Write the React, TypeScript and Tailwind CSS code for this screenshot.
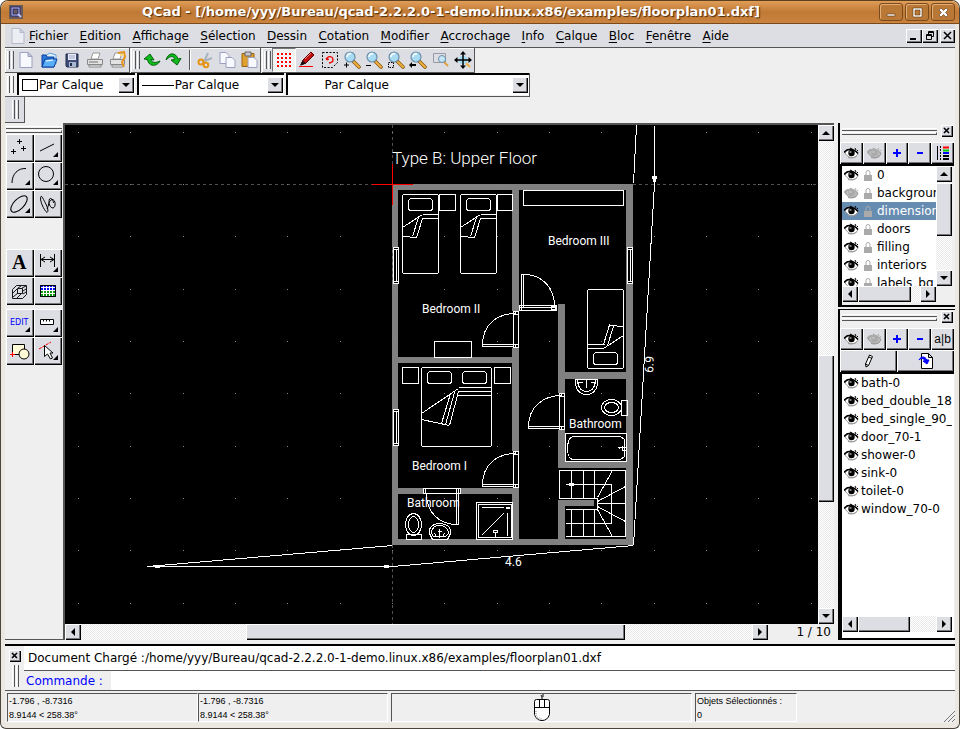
import React from 'react';
import { clsx } from 'clsx';

const raised = 'bg-[#dddee4] shadow-[inset_1px_1px_0_#fff,inset_-1px_-1px_0_#000,inset_-2px_-2px_0_#77777c]';
const dither = 'bg-[repeating-conic-gradient(#e9e9e9_0_25%,#fff_0_50%)] bg-[length:2px_2px]';

type Dir = 'up' | 'down' | 'left' | 'right';

const arrows: Record<Dir, string> = {
  up: 'M4 10h8l-4-4z',
  down: 'M4 6h8l-4 4z',
  left: 'M10 4v8l-4-4z',
  right: 'M6 4v8l4-4z',
};

const Arrow: React.FC<{ dir: Dir }> = ({ dir }) => (
  <svg width="16" height="16" viewBox="0 0 16 16" className="block">
    <path d={arrows[dir]} fill="#000" />
  </svg>
);

const ArrowButton: React.FC<{ dir: Dir; label: string }> = ({ dir, label }) => (
  <button aria-label={label} className={clsx('size-4 shrink-0', raised)}>
    <Arrow dir={dir} />
  </button>
);

interface ScrollBarProps {
  vertical?: boolean;
  before: number;
  thumb: number;
  after: number;
}

const ScrollBar: React.FC<ScrollBarProps> = ({ vertical, before, thumb, after }) => (
  <div className={clsx('flex', dither, vertical ? 'h-full w-4 flex-col' : 'h-4 flex-1')}>
    <ArrowButton dir={vertical ? 'up' : 'left'} label="Reculer" />
    <div style={{ flex: `${before} 1 0` }} />
    <div className={raised} style={{ flex: `${thumb} 1 0` }} />
    <div style={{ flex: `${after} 1 0` }} />
    <ArrowButton dir={vertical ? 'down' : 'right'} label="Avancer" />
  </div>
);

const VGrip: React.FC = () => (
  <div className="flex shrink-0 items-stretch gap-px py-[3px] pl-0.5 pr-px">
    <div className="w-[3px] border-l border-r border-l-white border-r-[#555]" />
    <div className="w-[3px] border-l border-r border-l-white border-r-[#555]" />
  </div>
);

const HGrip: React.FC = () => (
  <div className="flex flex-1 flex-col gap-px pt-[3px]">
    <div className="h-[3px] border-b border-t border-b-[#555] border-t-white" />
    <div className="h-[3px] border-b border-r border-t border-b-[#555] border-r-[#555] border-t-white" />
  </div>
);

const CloseBox: React.FC = () => (
  <button aria-label="Fermer le panneau" className={clsx('flex size-3 items-center justify-center', raised)}>
    <svg width="8" height="8" viewBox="0 0 8 8">
      <path d="M1 1l5 5M6 1l-5 5" stroke="#000" strokeWidth="1.6" />
    </svg>
  </button>
);

/* ---------- toolbar icons ---------- */

const Svg: React.FC<{ children: React.ReactNode }> = ({ children }) => (
  <svg width="18" height="18" viewBox="0 0 18 18" fill="none" className="block">
    {children}
  </svg>
);

const Lens: React.FC = () => (
  <>
    <path d="M10 10l6 6" stroke="#8a5a14" strokeWidth="3.6" strokeLinecap="round" />
    <path d="M11 11l5 5" stroke="#f0b040" strokeWidth="2" strokeLinecap="round" />
    <circle cx="7" cy="6" r="5" fill="#a8dcf4" stroke="#6d8fa8" strokeWidth="1.2" />
    <path d="M4 6a3 3 0 0 1 4-3" stroke="#fff" strokeWidth="1.6" />
  </>
);

const PageShape: React.FC<{ d: string }> = ({ d }) => <path d={d} fill="#f8f9fe" stroke="#9aa0bd" />;

const icons = {
  doc: (
    <Svg>
      <PageShape d="M3 1.500h8l4 4v11h-12z" />
      <path d="M11 1.500v4h4z" fill="#c9cee6" stroke="#9aa0bd" />
    </Svg>
  ),
  open: (
    <Svg>
      <path d="M5 5l5-3 6 2v9h-11z" fill="#dff1ff" stroke="#5d9fd8" />
      <path d="M2 4h4l1 2h7v10H2z" fill="#2b78d8" stroke="#0b3fa0" />
      <path d="M2 16l3-8h12l-3 8z" fill="#59aef5" stroke="#0b3fa0" />
      <path d="M6 10l7-1" stroke="#d3edff" strokeWidth="1.5" />
    </Svg>
  ),
  save: (
    <Svg>
      <path d="M3 3h12v13H4l-1-1z" fill="#3f4c78" stroke="#222b4c" />
      <path d="M5 3h8v6H5z" fill="#e8ecf8" />
      <path d="M6 5h6M6 7h6" stroke="#9ca6c4" />
      <path d="M6 11h7v5H6z" fill="#a9b4cf" />
      <path d="M7 12h2v3H7z" fill="#222b4c" />
    </Svg>
  ),
  print: (
    <Svg>
      <path d="M5 8l2-6h7l-2 6z" fill="#fff" stroke="#999" />
      <path d="M1.500 8.500h15v5h-15z" fill="#e2e2e2" stroke="#888" />
      <path d="M3 14h12v2H3z" fill="#f7f7f7" stroke="#888" />
      <path d="M3 11h9" stroke="#777" />
    </Svg>
  ),
  preview: (
    <Svg>
      <path d="M4 8l2-6h7l-2 6z" fill="#fff" stroke="#999" />
      <path d="M1.500 8.500h14v5h-14z" fill="#e2e2e2" stroke="#888" />
      <path d="M3 14h11v2H3z" fill="#f7f7f7" stroke="#888" />
      <path d="M9 2l6-1 1 5-3 5 2 5" stroke="#e8941c" strokeWidth="2" />
      <path d="M11 4h4" stroke="#ffd88a" strokeWidth="2" />
    </Svg>
  ),
  undo: (
    <Svg>
      <path d="M1 8l6-5 4 6-3-.5c.5 3 4 4 9 1.500C15 15 6 17 4.500 8.500z" fill="#0fbb1c" stroke="#06610c" />
    </Svg>
  ),
  redo: (
    <Svg>
      <path d="M1 9C3 1 11 1 13 8l3-.5-4 6.500-6-5 3.500-.5C9 5 6 4 1 9z" fill="#0fbb1c" stroke="#06610c" />
    </Svg>
  ),
  cut: (
    <Svg>
      <path d="M12 2L8 11M16 7L6 11" stroke="#a8b2bf" strokeWidth="2" />
      <circle cx="5" cy="11" r="2.500" stroke="#e69414" strokeWidth="2" />
      <circle cx="10" cy="14" r="2.300" stroke="#e69414" strokeWidth="2" />
    </Svg>
  ),
  copy: (
    <Svg>
      <PageShape d="M2 1.500h6l3 3v8H2z" />
      <PageShape d="M8 6.500h6l3 3v7H8z" />
    </Svg>
  ),
  paste: (
    <Svg>
      <path d="M2 2.500h12v13H2z" fill="#dfa030" stroke="#97650f" />
      <path d="M5 1h6v4H5z" fill="#c4c7d0" stroke="#666" />
      <PageShape d="M8 6.500h6l3 3v7H8z" />
    </Svg>
  ),
  grid: (
    <svg width="18" height="18" viewBox="0 0 18 18" shapeRendering="crispEdges">
      {[2, 6, 10, 14].map((x) => [2, 6, 10, 14].map((y) => <rect key={`${x}-${y}`} x={x} y={y} width="2" height="2" fill="#f00" />))}
    </svg>
  ),
  draft: (
    <Svg>
      <path d="M1 15.500h14" stroke="#f00" />
      <path d="M3 14l2-5 8-8 3 3-8 8z" fill="#c01010" stroke="#5c0000" />
      <path d="M2 14.500l2.500-5 3.500 3z" fill="#111" />
      <path d="M7 8l6-6" stroke="#ff8080" />
    </Svg>
  ),
  redraw: (
    <Svg>
      <path d="M1.500 1.500h15v10l-5 5h-10z" stroke="#000" strokeDasharray="2 1.500" />
      <path d="M6 9a3 3 0 1 1 4 2.500M6 9l-1-2M6 9l2-1M10 11.500l-2 .5" stroke="#e00" strokeWidth="1.300" />
    </Svg>
  ),
  zoomIn: (
    <Svg>
      <Lens />
      <path d="M1 14h5M3.500 11.500v5" stroke="#000" />
    </Svg>
  ),
  zoomOut: (
    <Svg>
      <Lens />
      <path d="M1 14.500h5" stroke="#000" />
    </Svg>
  ),
  zoomAuto: (
    <Svg>
      <Lens />
      <path d="M1.500 11.500h5v5h-5z" stroke="#000" strokeDasharray="1.500 1" />
    </Svg>
  ),
  zoomPrev: (
    <Svg>
      <Lens />
      <path d="M0 14l3-3v2h4v2H3v2z" fill="#000" />
    </Svg>
  ),
  zoomWin: (
    <Svg>
      <path d="M1.500 2.500h12v9h-12z" stroke="#9a9aa6" />
      <path d="M12 11l4 4" stroke="#e0a040" strokeWidth="2" />
      <circle cx="10" cy="8" r="3.500" fill="#c4e6f6" stroke="#6d8fa8" />
    </Svg>
  ),
  zoomPan: (
    <Svg>
      <path d="M11 11l5 5" stroke="#f0b040" strokeWidth="2" />
      <circle cx="9" cy="9" r="4.500" fill="#a8dcf4" />
      <path d="M9 2v14M2 9h14" stroke="#000" strokeWidth="1.500" />
      <path d="M9 0l3 3.500H6zM9 18l3-3.500H6zM0 9l3.500-3v6zM18 9l-3.500-3v6z" fill="#000" />
    </Svg>
  ),
};

const ToolButton: React.FC<{ name: keyof typeof icons; label: string; pressed?: boolean }> = ({ name, label, pressed }) => (
  <button
    aria-label={label}
    className={clsx(
      'flex flex-1 items-center justify-center',
      pressed && 'border border-b-white border-l-[#777] border-r-white border-t-[#777]',
      pressed && dither,
    )}
  >
    {icons[name]}
  </button>
);

/* ---------- left tool palette ---------- */

const palette: { label: string; sub?: boolean; art: React.ReactNode }[][] = [
  [
    { label: 'Points', art: <path d="M11 7.500h5M13.500 5v5M5 17.500h5M7.500 15v5M15 14.500h5M17.500 12v5" /> },
    { label: 'Lignes', sub: true, art: <path d="M6 17l14-7" /> },
    { label: 'Arcs', sub: true, art: <path d="M6 21C6 12 12 6 20 6.500" /> },
    { label: 'Cercles', sub: true, art: <circle cx="12" cy="12" r="7.500" /> },
    { label: 'Ellipses', sub: true, art: <ellipse cx="13" cy="14" rx="10.500" ry="5" transform="rotate(-45 13 14)" /> },
    {
      label: 'Splines',
      art: <path d="M7 6.500c-2 3 3 14 6 16 3-2-2-10-4.500-15-1-1.500-1.500-1.500-1.500-1zM13 19c2-3 1-8 5-9.500 4 0 4 8 1 8.500-3 0-5-5-3.500-9 2-2 4 2 4 4" />,
    },
  ],
  [
    {
      label: 'Textes',
      art: (
        <text x="6" y="20" fontSize="20" fontWeight="bold" fontFamily='"Liberation Serif", serif' fill="#000" stroke="none">
          A
        </text>
      ),
    },
    { label: 'Cotations', sub: true, art: <path d="M6.500 5v13M20.500 5v13M7 10.500h13M11 8l-4 2.500 4 2.500M16 8l4 2.500-4 2.500" /> },
    {
      label: 'Hachures',
      art: (
        <path
          strokeWidth=".9"
          d="M6.500 12.500l4-4h10v9l-4 4h-10zM11.500 11.500h5v5h-5zM7 16l4-4M7 20l5-4M11 21l4-4M16 11l4-2M17 14l3-2M17 17l3-2M12 11l3-2"
        />
      ),
    },
    {
      label: 'Image',
      art: (
        <>
          <path d="M6 8h16v5H6z" fill="#00f" stroke="none" />
          <path d="M6 13h16v7H6z" fill="#0a9a0a" stroke="none" />
          <path d="M6 10.500h16M6 13.500h16M6 16.500h16M9.500 8v12M12.500 8v12M15.500 8v12M18.500 8v12" stroke="#fff" />
          <path d="M6.500 8.500h15v11h-15z" />
        </>
      ),
    },
  ],
  [
    {
      label: 'Edition',
      sub: true,
      art: (
        <text x="4" y="16" fontSize="8" fontFamily='"DejaVu Sans", sans-serif' fill="#00f" stroke="none">
          EDIT
        </text>
      ),
    },
    { label: 'Mesures', sub: true, art: <path d="M6.500 10.500h13v5h-13zM9.500 10.500v2M12.500 10.500v2M15.500 10.500v2" fill="#fff" /> },
    {
      label: 'Blocs',
      art: (
        <>
          <path d="M6.500 7.500h12v10h-12z" fill="#fffbd6" />
          <circle cx="18" cy="17" r="5" fill="#fffbd6" />
          <path d="M4 17.500h5M6.500 15v5" stroke="#f00" />
        </>
      ),
    },
    {
      label: 'Sélection',
      sub: true,
      art: (
        <>
          <path d="M5 12l12-7" stroke="#f00" strokeDasharray="3 1" />
          <path d="M10.500 8.500v11l3-2.500 3 5 2-1-2.500-5h3z" fill="#fff" />
        </>
      ),
    },
  ],
];

const PaletteGroup: React.FC<{ index: number }> = ({ index }) => (
  <div className="grid grid-cols-2">
    {palette[index].map((tool) => (
      <button key={tool.label} aria-label={tool.label} className={clsx('size-7', raised)}>
        <svg width="28" height="28" viewBox="0 0 28 28" fill="none" stroke="#000">
          {tool.art}
          {tool.sub && <path d="M24 18v5h-5z" fill="#000" stroke="none" />}
        </svg>
      </button>
    ))}
  </div>
);

/* ---------- docks ---------- */

const Eye: React.FC<{ off?: boolean }> = ({ off }) => {
  const ink = off ? '#aaa' : '#000';
  return (
    <svg width="15" height="12" viewBox="0 0 15 12" fill="none" className="block shrink-0">
      <path d="M1 6c3-5 9-5 13 1-3 5-9 5-13-1z" fill={off ? '#bbb' : '#fff'} stroke="#999" />
      <path d="M0 5.500c3-4 9-5 14 1" stroke={ink} strokeWidth="1.500" />
      <path d="M2 3.500l2-1M6 1l2 1M11 1l1 2M13 3l1 1" stroke={ink} />
      <circle cx="7.500" cy="6" r="3.200" fill={ink} />
      <path d="M5.500 5h2" stroke={off ? '#ddd' : '#fff'} />
      <path d="M4 10.500c3 1 7 .5 9-2" stroke="#999" />
    </svg>
  );
};

const Lock: React.FC = () => (
  <svg width="8" height="11" viewBox="0 0 8 11" fill="none" className="block shrink-0">
    <path d="M2 5V2.500a2 2 0 0 1 4 0V5" stroke="#aaa" />
    <path d="M0 5h8v6H0z" fill="#aaa" />
  </svg>
);

const Plus: React.FC = () => (
  <svg width="10" height="10" viewBox="0 0 10 10">
    <path d="M5 1v8M1 5h8" stroke="#00f" strokeWidth="2" />
  </svg>
);

const Minus: React.FC = () => (
  <svg width="10" height="10" viewBox="0 0 10 10">
    <path d="M2 5h6" stroke="#00f" strokeWidth="2" />
  </svg>
);

const LayerAttributes: React.FC = () => (
  <svg width="14" height="16" viewBox="0 0 14 16" fill="none">
    <path d="M1.500 1v14" stroke="#000" />
    <path d="M4.500 1v14" stroke="#000" strokeDasharray="2 1" />
    <path d="M7 2.500h6" stroke="#f00" strokeWidth="2" />
    <path d="M7 5.500h6" stroke="#0c0" strokeWidth="2" />
    <path d="M7 8h6" stroke="#00f" strokeWidth="2" />
    <path d="M7 11h6M7 14h6" stroke="#000" strokeWidth="2" />
  </svg>
);

const DockButton: React.FC<{ label: string; children: React.ReactNode }> = ({ label, children }) => (
  <button aria-label={label} className={clsx('flex h-[22px] flex-1 items-center justify-center', raised)}>
    {children}
  </button>
);

const DockHeader: React.FC = () => (
  <div className="flex h-[17px] shrink-0 items-start gap-1 pl-0.5 pr-px">
    <HGrip />
    <CloseBox />
  </div>
);

const layers = [
  { name: '0' },
  { name: 'background', hidden: true },
  { name: 'dimensions', selected: true },
  { name: 'doors' },
  { name: 'filling' },
  { name: 'interiors' },
  { name: 'labels_bg' },
];

const blocks = ['bath-0', 'bed_double_180', 'bed_single_90_0', 'door_70-1', 'shower-0', 'sink-0', 'toilet-0', 'window_70-0'];

const LayerDock: React.FC = () => (
  <section className="flex h-[184px] shrink-0 flex-col border-b-2 border-l-2 border-b-black border-l-black pr-px pt-0.5">
    <DockHeader />
    <div className="flex">
      <DockButton label="Montrer tous les calques"><Eye /></DockButton>
      <DockButton label="Cacher tous les calques"><Eye off /></DockButton>
      <DockButton label="Ajouter un calque"><Plus /></DockButton>
      <DockButton label="Supprimer le calque"><Minus /></DockButton>
      <DockButton label="Attributs du calque"><LayerAttributes /></DockButton>
    </div>
    <div className="flex min-h-0 flex-1 flex-col border-l-2 border-t-2 border-black bg-[#efefef] pr-0.5">
      <div className="flex h-[120px]">
        <ul className="flex-1 overflow-hidden bg-white">
          {layers.map((layer) => (
            <li
              key={layer.name}
              className={clsx(
                'flex h-[18px] items-center gap-[5px] whitespace-nowrap pl-0.5',
                layer.selected && 'bg-[#678cb2] text-white',
              )}
            >
              <Eye off={layer.hidden} />
              <Lock />
              <span>{layer.name}</span>
            </li>
          ))}
        </ul>
        <ScrollBar vertical before={1} thumb={54} after={35} />
      </div>
      <div className="flex pr-4">
        <ScrollBar before={0} thumb={54} after={9} />
      </div>
    </div>
  </section>
);

const BlockDock: React.FC = () => (
  <section className="mt-0.5 flex min-h-0 flex-1 flex-col border-b-2 border-l-2 border-t border-black pr-px pt-px">
    <DockHeader />
    <div className="flex">
      <DockButton label="Montrer tous les blocs"><Eye /></DockButton>
      <DockButton label="Cacher tous les blocs"><Eye off /></DockButton>
      <DockButton label="Ajouter un bloc"><Plus /></DockButton>
      <DockButton label="Supprimer le bloc"><Minus /></DockButton>
      <DockButton label="Renommer le bloc">
        <span className='font-["Liberation_Sans",sans-serif]'>a|b</span>
      </DockButton>
    </div>
    <div className="flex">
      <DockButton label="Modifier le bloc">
        <svg width="16" height="16" viewBox="0 0 16 16" fill="#fff" stroke="#000">
          <path d="M5 14l-.5-3 4-9 3 1.500-4 9zM4.500 11l3 1.500M8 4l3 1.500" />
        </svg>
      </DockButton>
      <DockButton label="Insérer le bloc">
        <svg width="16" height="16" viewBox="0 0 16 16" fill="#fff" stroke="#000">
          <path d="M3.500.5h7l4 4v11h-11zM10.500.5v4h4" />
          <path d="M1 7c2-4 6-4 8 0h2L9 11 5 8h2C6 5 3 5 1 7z" fill="#00f" stroke="#00f" />
        </svg>
      </DockButton>
    </div>
    <div className="flex min-h-0 flex-1 flex-col border-l-2 border-t-2 border-black bg-white pr-0.5">
      <ul className="flex-1 overflow-hidden">
        {blocks.map((name) => (
          <li key={name} className="flex h-[18px] items-center gap-0.5 whitespace-nowrap pl-0.5">
            <Eye />
            <span>{name}</span>
          </li>
        ))}
      </ul>
      <div className="flex pb-1.5">
        <ScrollBar before={0} thumb={52} after={26} />
      </div>
    </div>
  </section>
);

/* ---------- drawing ---------- */

const gridX = [78, 130, 183, 235, 287, 340, 392, 444, 497, 549, 601, 654, 706, 758, 811];
const gridY = [132, 184, 236, 289, 341, 393, 446, 498, 550, 603];

// x, y, width, height of every wall segment
const walls = [
  [392, 184, 241, 6],
  [392, 184, 6, 361],
  [626, 184, 7, 361],
  [392, 539, 241, 6],
  [512, 190, 7, 121],
  [512, 348, 7, 103],
  [512, 488, 7, 51],
  [398, 357, 114, 6],
  [398, 488, 114, 6],
  [558, 304, 7, 89],
  [558, 430, 7, 38],
  [565, 372, 61, 7],
  [558, 462, 68, 6],
  [558, 500, 7, 39],
  [558, 500, 36, 6],
];

const SingleBed: React.FC<{ transform: string }> = ({ transform }) => (
  <g transform={transform}>
    <rect x="0" y="0" width="36" height="79" rx="2" />
    <rect x="6" y="4" width="24" height="12" rx="3" />
    <path d="M20 20h16M19 24h17M0 33L20 20M16 23L10 42M20 24L14 43.500L0 41.500" />
  </g>
);

const WindowFrame: React.FC<{ x: number; y: number }> = ({ x, y }) => (
  <g transform={`translate(${x} ${y})`}>
    <rect x="0" y="0" width="5" height="36" fill="#000" />
    <path d="M2.500 2v32M0 2h5M0 34h5" />
  </g>
);

const Door: React.FC<{ x: number; y: number }> = ({ x, y }) => (
  <g transform={`translate(${x} ${y})`}>
    <rect x="0" y="0" width="5" height="36" fill="#000" />
    <path d="M0 3h5M0 33h5M2 0v3M2 33v3M0 33h-31v2h31M-31 33C-31 14-17 2 2 2" />
  </g>
);

const FloorPlan: React.FC = () => (
  <svg className="block h-full w-full bg-black" role="img" aria-label="floorplan01.dxf">
    <g transform="translate(-65 -125)" fill="none" stroke="#fff" shapeRendering="crispEdges">
      <g fill="#808080" stroke="none">
        {walls.map(([x, y, w, h]) => (
          <rect key={`${x}-${y}-${w}`} x={x} y={y} width={w} height={h} />
        ))}
      </g>
      <path d="M65 184.500H392M633 184.500H818M392.500 125V184M392.500 545V624M392.500 247V283" stroke="#505050" strokeDasharray="3 3" />
      {gridX.map((x) => gridY.map((y) => <rect key={`${x}-${y}`} x={x} y={y} width="1" height="1" fill="#888" stroke="none" />))}
      <g transform="translate(.5 .5)">
        <SingleBed transform="translate(402 194)" />
        <SingleBed transform="translate(460 194)" />
        <SingleBed transform="translate(623 368) rotate(180)" />
        <path d="M439 194h16v16h-16zM497 194h15v16h-15zM523 190h100v15h-100zM434 341h37v16h-37z" />
        <path d="M402 367h16v16h-16zM494 367h16v16h-16z" />

        <rect x="421" y="367" width="70" height="79" rx="2" />
        <rect x="427" y="371" width="24" height="12" rx="3" />
        <rect x="462" y="371" width="24" height="12" rx="3" />
        <path d="M458 387h33M457 391h34M456 395h35M421 413L458 388M421 419L449 425M450 393L441 423M454 392L445 424M458 391L449 425" />

        <WindowFrame x={393} y={247} />
        <WindowFrame x={627} y={247} />
        <WindowFrame x={393} y={409} />
        <Door x={513} y={311} />
        <Door x={513} y={451} />
        <Door x={559} y={393} />

        <rect x="519" y="305" width="37" height="5" fill="#000" />
        <path d="M521 310v-36h2v32M523 274C542 274 554 287 554 306M551 306h4v3h-4zM519 307h37" />
        <rect x="423" y="488" width="37" height="5" fill="#000" />
        <path d="M425 488v5M458 488v36h-2v-36M426 493C426 510 437 524 456 524" />

        {/* stairs */}
        <path d="M597 498h-38v-28h66v66h-60M571 470v28M583 470v28M594 470v28M571 509v27M583 509v27M594 509v27M565 509h32v-12M565 484h46v39h-46" />
        <path d="M597 497L612 470M597 501L625 486M597 503h28M597 506L625 521M597 509L612 536" />
        <rect x="569" y="483" width="4" height="2" fill="#fff" />

        {/* upper bathroom */}
        <path d="M575 379h22C598 388 593 394 586 394S574 388 575 379zM577 379C577 387 581 391 586 391S595 387 595 379M577 382h5M590 382h5M586 379v8" />
        <ellipse cx="611" cy="407" rx="10" ry="8" />
        <ellipse cx="611" cy="407" rx="7" ry="5" />
        <path d="M621 400h6v15h-6zM565 433h61v28h-61z" />
        <path d="M573 436h47l4 3v17l-4 3h-47c-4 0-6-5-6-11s2-12 6-12zM617 447h8M619 446v2M622 445v5h3" />

        {/* lower bathroom */}
        <ellipse cx="413" cy="524" rx="8" ry="11" />
        <ellipse cx="413" cy="524" rx="5" ry="8" />
        <path d="M406 534h15v5h-15z" />
        <path d="M429 533C428 526 433 523 439 523S451 526 450 533L447 539h-15zM431 533C431 528 434 525 439 525S448 528 448 533L445 536h-12zM439 528v9M437 531h4M434 533l2 3M444 533l-2 3" />
        <path d="M476 502h36v37h-36zM478 504h33v33h-33zM481 507h22M507 512v23M481 535L503 513M495 532v5M493 530h4v2h-4z" />
        <rect x="506" y="507" width="3" height="1" fill="#fff" />

        {/* dimension lines */}
        <path d="M636 125L633 183M654 125V183M654 183L633 545M392 545L147 566H392L633 545" />
        <path d="M652 176h4l-1 5h-2zM155 565h4v2h-4zM384 565h4v2h-4z" fill="#fff" />
      </g>
      <g fill="#f00" stroke="none">
        <rect x="372" y="184" width="41" height="1" />
        <rect x="392" y="164" width="1" height="41" />
      </g>
    </g>
    <g transform="translate(-65 -125)" fill="#fff" fontFamily="Roboto, sans-serif" fontSize="12">
      <text x="392" y="164" fontSize="17" fontWeight="300">Type B: Upper Floor</text>
      <text x="422" y="313">Bedroom II</text>
      <text x="548" y="245">Bedroom III</text>
      <text x="412" y="470">Bedroom I</text>
      <text x="407" y="507">Bathroom</text>
      <text x="569" y="428">Bathroom</text>
      <text x="505" y="566">4.6</text>
      <text transform="translate(653 373) rotate(-87)">6.9</text>
    </g>
  </svg>
);

/* ---------- window chrome ---------- */

const menus = [
  'Fichier', 'Edition', 'Affichage', 'Sélection', 'Dessin', 'Cotation', 'Modifier',
  'Accrochage', 'Info', 'Calque', 'Bloc', 'Fenêtre', 'Aide',
];

const windowButtons = [
  { label: 'Réduire', d: 'M4 10h8v2H4z' },
  { label: 'Agrandir', d: 'M4 4h9v9H4zM6 6v5h5V6z' },
  { label: 'Fermer', d: 'M4 6l2-2 2.500 2.500L11 4l2 2-2.500 2.500L13 11l-2 2-2.500-2.500L6 13l-2-2 2.500-2.500z' },
];

const TitleBar: React.FC = () => (
  <header className="flex h-[23px] shrink-0 items-center rounded-t-lg border-b border-[#7b4a1c] bg-linear-to-b from-[#e09d58] via-[#c07a35] via-50% to-[#cb8340] pl-2 pr-1">
    <svg width="14" height="14" viewBox="0 0 14 14" fill="none">
      <rect width="14" height="14" fill="#6a5a58" />
      <rect x="3" y="3" width="7" height="7" stroke="#22226e" strokeWidth="3" />
      <rect x="3" y="3" width="7" height="7" stroke="#c0c4ee" strokeWidth="1" />
      <path d="M9 9l3 3" stroke="#c0c4ee" strokeWidth="2" />
    </svg>
    <h1 className="flex-1 whitespace-nowrap text-center text-[13px] font-bold leading-5 text-white [text-shadow:1px_1px_1px_#4a2a08]">
      QCad - [/home/yyy/Bureau/qcad-2.2.2.0-1-demo.linux.x86/examples/floorplan01.dxf]
    </h1>
    <div className="flex gap-0.5">
      {windowButtons.map((b) => (
        <button
          key={b.label}
          aria-label={b.label}
          className="flex h-[18px] w-6 items-center justify-center rounded-[3px] border border-[#7b4a1c] bg-[#b97836] shadow-[inset_1px_1px_0_#e3ae77]"
        >
          <svg width="16" height="16" viewBox="0 0 16 16" fill="#fff" fillRule="evenodd" stroke="#5c3510" strokeWidth=".6">
            <path d={b.d} />
          </svg>
        </button>
      ))}
    </div>
  </header>
);

const MenuBar: React.FC = () => (
  <nav className="flex h-6 shrink-0 items-center border-b border-[#555] bg-[#dddee4] pl-1">
    <span className="flex w-5 opacity-60">{icons.doc}</span>
    <div className="flex w-[700px] justify-between">
      {menus.map((m) => (
        <button key={m} className="leading-5">
          <span className="underline underline-offset-2">{m[0]}</span>
          {m.slice(1)}
        </button>
      ))}
    </div>
    <button aria-label="Réduire le document" className={clsx('ml-auto h-[14px] w-4', raised)}>
      <svg width="16" height="14"><path d="M4 9h6v2H4z" /></svg>
    </button>
    <button aria-label="Restaurer le document" className={clsx('h-[14px] w-4', raised)}>
      <svg width="16" height="14" fill="none" stroke="#000"><path d="M6.500 5V2.500h5v5H9M4.500 5.500h5v5h-5zM6 3.500h5M4 6.500h5" /></svg>
    </button>
    <button aria-label="Fermer le document" className={clsx('ml-0.5 h-[14px] w-[15px]', raised)}>
      <svg width="15" height="14" stroke="#000" strokeWidth="1.500"><path d="M4 3l7 7M11 3l-7 7" /></svg>
    </button>
  </nav>
);

const toolbarBox = 'flex border-b border-r border-[#555] bg-[#dddee4] shadow-[inset_1px_1px_0_#fff]';

const ToolBars: React.FC = () => (
  <div className="flex h-[25px] shrink-0 gap-px">
    <div className={clsx(toolbarBox, 'w-[125px]')}>
      <VGrip />
      <ToolButton name="doc" label="Nouveau" />
      <ToolButton name="open" label="Ouvrir" />
      <ToolButton name="save" label="Enregistrer" />
      <ToolButton name="print" label="Imprimer" />
      <ToolButton name="preview" label="Aperçu" />
    </div>
    <div className={clsx(toolbarBox, 'w-[130px]')}>
      <VGrip />
      <ToolButton name="undo" label="Annuler" />
      <ToolButton name="redo" label="Refaire" />
      <div className="mx-1 my-0.5 w-0.5 border-l border-r border-l-[#555] border-r-white" />
      <ToolButton name="cut" label="Couper" />
      <ToolButton name="copy" label="Copier" />
      <ToolButton name="paste" label="Coller" />
    </div>
    <div className={clsx(toolbarBox, 'w-[213px]')}>
      <VGrip />
      <ToolButton name="grid" label="Grille" pressed />
      <ToolButton name="draft" label="Brouillon" />
      <ToolButton name="redraw" label="Redessiner" />
      <ToolButton name="zoomIn" label="Zoom avant" />
      <ToolButton name="zoomOut" label="Zoom arrière" />
      <ToolButton name="zoomAuto" label="Zoom auto" />
      <ToolButton name="zoomPrev" label="Zoom précédent" />
      <ToolButton name="zoomWin" label="Zoom fenêtre" />
      <ToolButton name="zoomPan" label="Panoramique" />
    </div>
  </div>
);

interface PenSelectProps {
  label: string;
  width: string;
  indent: string;
  sample?: React.ReactNode;
}

const PenSelect: React.FC<PenSelectProps> = ({ label, width, indent, sample }) => (
  <div className={clsx('relative h-[22px] border-l-2 border-t-2 border-black bg-white', width)}>
    <select aria-label={label} className={clsx('h-full w-full appearance-none bg-transparent leading-4 outline-none', indent)}>
      <option>Par Calque</option>
    </select>
    <div className="pointer-events-none absolute inset-y-0 left-0 flex items-center">{sample}</div>
    <div className={clsx('pointer-events-none absolute bottom-0.5 right-px top-0.5 flex w-4 items-center', raised)}>
      <Arrow dir="down" />
    </div>
  </div>
);

const CoordBox: React.FC<{ width: string; lines: string[] }> = ({ width, lines }) => (
  <div className={clsx('border border-b-white border-l-[#555] border-r-white border-t-[#555] pl-px', width)}>
    {lines.map((l) => (
      <p key={l}>{l}</p>
    ))}
  </div>
);

export default function App() {
  return (
    <div className='h-screen bg-white font-["DejaVu_Sans",sans-serif] text-[12px] leading-4 text-black'>
      <div className="flex h-full flex-col rounded-t-lg rounded-b-md border border-t-[#5b4020] border-[#4a443c] bg-[#ece8e1]">
        <TitleBar />
        <div className="mx-1 mb-[5px] flex min-h-0 flex-1 flex-col bg-[#efefef]">
          <MenuBar />
          <ToolBars />
          <div className="flex h-6 w-[525px] shrink-0 gap-0.5 border-b border-r border-[#555]">
            <VGrip />
            <PenSelect
              label="Couleur"
              width="w-[118px]"
              indent="pl-5"
              sample={<span className="ml-[3px] h-3 w-4 border border-black bg-white" />}
            />
            <PenSelect
              label="Epaisseur"
              width="w-[148px]"
              indent="pl-9"
              sample={<span className="ml-[3px] w-8 border-t border-black" />}
            />
            <PenSelect label="Type de ligne" width="w-[243px]" indent="pl-9" />
          </div>
          <div className="flex h-[26px] w-5 shrink-0 justify-center border-b border-r border-[#555] bg-[#dddee4]">
            <VGrip />
          </div>

          <div className="flex min-h-0 flex-1">
            <aside className="flex w-[58px] shrink-0 flex-col border-b border-[#555] px-px">
              <div className="mb-px flex">
                <HGrip />
              </div>
              <PaletteGroup index={0} />
              <div className="h-[31px]" />
              <PaletteGroup index={1} />
              <div className="h-1" />
              <PaletteGroup index={2} />
            </aside>

            <main className="flex min-w-0 flex-1 flex-col border-l-2 border-t-2 border-[#555]">
              <div className="flex min-h-0 flex-1">
                <div className="min-w-0 flex-1">
                  <FloorPlan />
                </div>
                <ScrollBar vertical before={214} thumb={147} after={106} />
              </div>
              <div className="flex h-4">
                <ScrollBar before={165} thumb={380} after={127} />
                <span className="w-[66px] pr-[3px] text-right">1 / 10</span>
              </div>
            </main>

            <aside className="ml-1 flex w-[117px] shrink-0 flex-col overflow-hidden">
              <LayerDock />
              <BlockDock />
            </aside>
          </div>

          <div className="mt-1 flex h-[47px] shrink-0 border-b border-t-2 border-b-[#555] border-t-black">
            <div className="flex w-[19px] flex-col items-center pt-1">
              <CloseBox />
              <div className="flex flex-1">
                <VGrip />
              </div>
            </div>
            <div className="flex flex-1 flex-col">
              <p className="flex-1 border-b border-[#555] bg-white px-1 pt-1">
                Document Chargé :/home/yyy/Bureau/qcad-2.2.2.0-1-demo.linux.x86/examples/floorplan01.dxf
              </p>
              <div className="flex h-[19px] items-center">
                <label htmlFor="command" className="w-[87px] pl-0.5 text-[#0000ff]">
                  Commande :
                </label>
                <input id="command" className="h-full flex-1 bg-white outline-none" />
              </div>
            </div>
          </div>

          <footer className='flex h-8 shrink-0 pb-px pl-0.5 pt-0.5 font-["Liberation_Sans",sans-serif] text-[9px] leading-[14px]'>
            <CoordBox width="w-[191px]" lines={['-1.796 , -8.7316', '8.9144 < 258.38°']} />
            <CoordBox width="w-[190px]" lines={['-1.796 , -8.7316', '8.9144 < 258.38°']} />
            <div className="ml-[3px] flex w-[301px] justify-center border border-b-white border-l-[#555] border-r-white border-t-[#555]">
              <svg width="18" height="28" viewBox="0 0 18 28" fill="none" stroke="#000">
                <path d="M1.500 7.500q0-2 2-2h11q2 0 2 2v13q-2 6-7.500 6t-7.500-6z" fill="#fff" />
                <path d="M1.500 13.500h15M6.500 5.500v8M11.500 5.500v8M9 5V3L8 1M10 3V0" />
                <path d="M3 17v4q2 4 6 4" stroke="#bbb" strokeDasharray="1 1" strokeWidth="2" />
              </svg>
            </div>
            <div className="ml-[3px] flex">
              <CoordBox width="w-[102px]" lines={['Objets Sélectionnés :', '0']} />
            </div>
            <svg width="12" height="12" viewBox="0 0 12 12" className="ml-auto self-end" stroke="#777">
              <path d="M1 12L12 1M5 12l7-7M9 12l3-3" />
            </svg>
          </footer>
        </div>
      </div>
    </div>
  );
}
